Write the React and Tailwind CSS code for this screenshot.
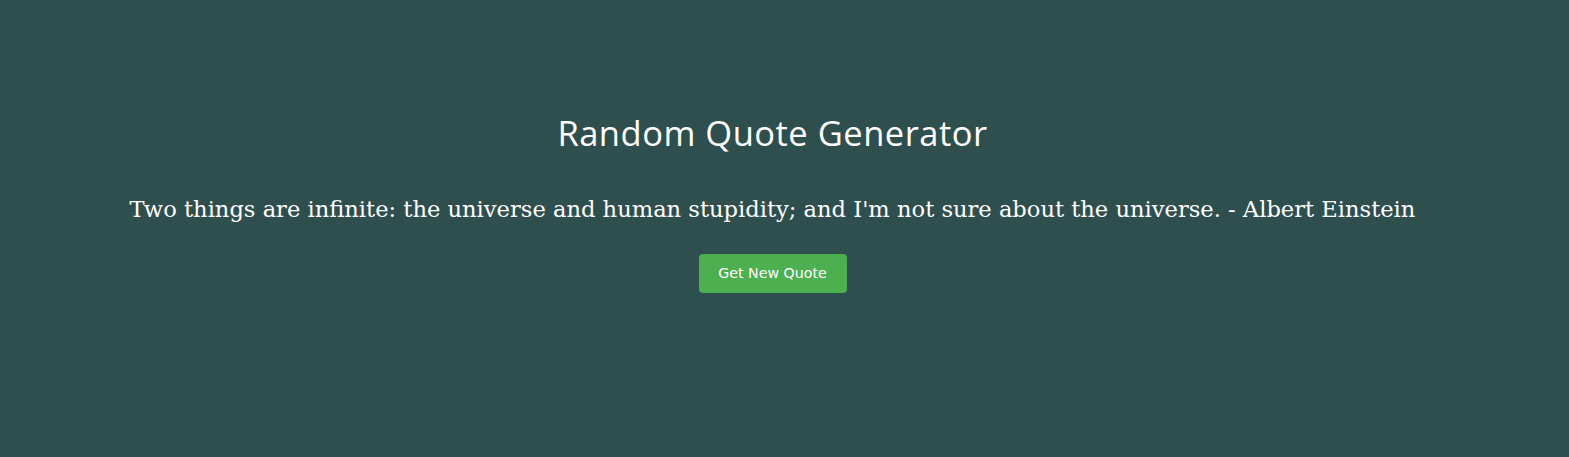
export default function App() {
  return (
    <div className="min-h-[457px] bg-[#2f4f4f] flex flex-col items-center pt-[112px] pr-[24px] text-white">
      <h1 className="text-[34.5px] leading-[42px] font-['Open_Sans',sans-serif] tracking-[0.5px]">
        Random Quote Generator
      </h1>
      <p className="mt-[39px] text-[22.6px] leading-[32px] font-['DejaVu_Serif',serif]">
        Two things are infinite: the universe and human stupidity; and I'm not sure about the universe. - Albert Einstein
      </p>
      <button className="mt-[29px] w-[148px] h-[39px] rounded-[4px] bg-[#4caf50] text-[14.2px] font-['DejaVu_Sans',sans-serif]">
        Get New Quote
      </button>
    </div>
  );
}
